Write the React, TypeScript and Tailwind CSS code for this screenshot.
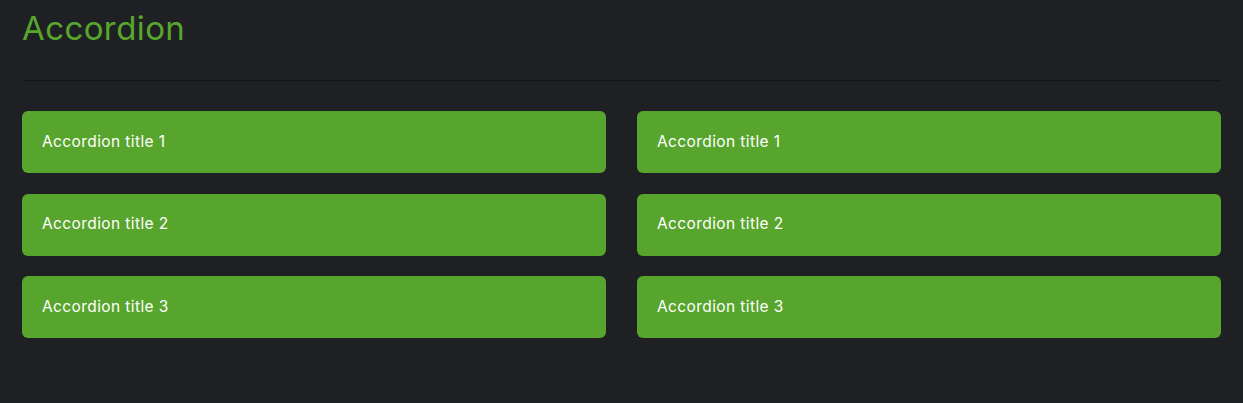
const columns = [0, 1]
const items = ["Accordion title 1", "Accordion title 2", "Accordion title 3"]

export default function App() {
  return (
    <div className="min-h-[403px] w-full bg-[#1f2023] px-[22px] pt-[8px] pb-[64px] font-['Inter',sans-serif]">
      <h1 className="h-[40px] text-[33px] leading-[40px] font-normal text-[#58a72d] tracking-[0.4px]">Accordion</h1>
      <div className="mt-[32px] h-px w-full bg-[#141517]" />
      <div className="mt-[30px] grid grid-cols-2 gap-x-[31px]">
        {columns.map((c) => (
          <div key={c} className="flex flex-col gap-[20.5px]">
            {items.map((t) => (
              <button
                key={t}
                className="flex h-[62px] w-full items-center rounded-[6px] bg-[#57a52c] px-[20px] pb-[1px] text-left text-[15.5px] text-white tracking-[0.4px]"
              >
                {t}
              </button>
            ))}
          </div>
        ))}
      </div>
    </div>
  )
}
